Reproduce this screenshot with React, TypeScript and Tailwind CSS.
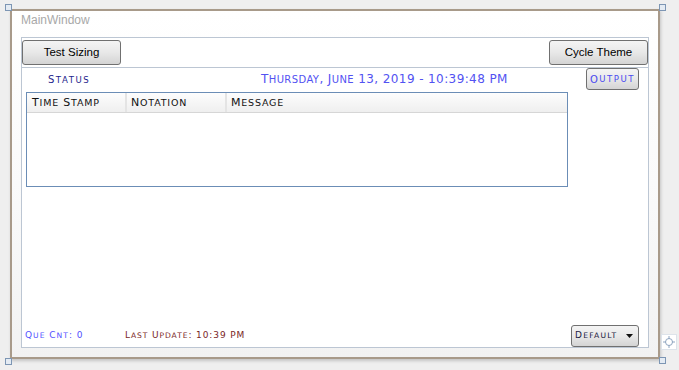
import React from 'react';

// Copperplate-style small caps: lowercase runs are drawn as smaller capitals
function Caps({ text, small }: { text: string; small: string }) {
  const parts = text.split(/([a-z]+)/);
  return (
    <>
      {parts.map((p, i) =>
        /^[a-z]+$/.test(p) ? (
          <span key={i} className={small}>
            {p.toUpperCase()}
          </span>
        ) : (
          <span key={i}>{p}</span>
        )
      )}
    </>
  );
}

function Handle({ className }: { className: string }) {
  return <div className={`absolute w-[7px] h-[7px] border border-[#7d96b4] bg-[#e4ebf3] ${className}`} />;
}

const btn =
  'rounded-[3px] border border-[#707070] bg-gradient-to-b from-[#f4f4f4] via-[#e8e8e8] to-[#d4d4d4] flex items-center';

export default function App() {
  return (
    <div className="relative w-[679px] h-[370px] bg-[#efefef] overflow-hidden pt-[9px] pl-[10px] font-['Liberation_Sans',sans-serif]">
      <div className="w-[650px] h-[350px] border-2 border-[#a89a8a] bg-gradient-to-b from-white via-[#fafafa] to-[#f2f2f2] shadow-[1px_2px_3px_rgba(0,0,0,0.18)] flex flex-col">
        <div className="h-[26px] pl-[9px] pt-[1px] text-[12px] text-[#a8a8a8] leading-[16px]">MainWindow</div>

        <div className="ml-[9px] w-[628px] h-[311px] border border-[#bcc6d3] bg-white flex flex-col">
          {/* button row */}
          <div className="h-[29px] flex justify-between items-start pt-[2px]">
            <button className={`${btn} w-[99px] h-[25px] justify-center text-[11.5px] text-black`}>Test Sizing</button>
            <button className={`${btn} w-[99px] h-[25px] justify-center text-[11.5px] text-black`}>Cycle Theme</button>
          </div>

          {/* content */}
          <div className="flex-1 border-t border-[#bcc6d3] flex flex-col font-['DejaVu_Sans',sans-serif]">
            <div className="h-[22px] flex items-center pl-[26px]">
              <span className="w-[213px] pt-[1px] text-[10px] tracking-[1.5px] text-[#1e1e8c]">
                <Caps text="Status" small="text-[8.6px]" />
              </span>
              <span className="text-[12px] tracking-[0.4px] text-[#5252f2]">
                <Caps text="Thursday, June 13, 2019 - 10:39:48 PM" small="text-[10px]" />
              </span>
              <button className={`${btn} ml-auto mr-[9px] w-[53px] h-[22px] justify-center text-[10px] tracking-[1.5px] text-[#4a4af0]`}>
                <Caps text="Output" small="text-[8.6px]" />
              </button>
            </div>

            {/* grid */}
            <div className="ml-[4px] mt-[2px] w-[542px] h-[95px] border border-[#6b8db6] flex flex-col">
              <div className="h-[20px] flex border-b border-[#d6d6d6] bg-gradient-to-b from-[#fdfdfd] to-[#efefef] text-[11px] tracking-[0.8px] text-[#111]">
                <div className="w-[100px] pl-[5px] pt-[2px] flex items-center border-r-2 border-[#e4e4e4]">
                  <span><Caps text="Time Stamp" small="text-[9.5px]" /></span>
                </div>
                <div className="w-[100px] pl-[4px] pt-[2px] flex items-center border-r-2 border-[#e4e4e4]">
                  <span><Caps text="Notation" small="text-[9.5px]" /></span>
                </div>
                <div className="flex-1 pl-[4px] pt-[2px] flex items-center">
                  <span><Caps text="Message" small="text-[9.5px]" /></span>
                </div>
              </div>
            </div>

            {/* footer */}
            <div className="mt-auto h-[22px] flex items-center">
              <span className="ml-[3px] w-[100px] text-[9px] tracking-[1px] text-[#5252ff]">
                <Caps text="Que Cnt: 0" small="text-[7.6px]" />
              </span>
              <span className="text-[9px] tracking-[0.9px] text-[#7a2626]">
                <Caps text="Last Update: 10:39 PM" small="text-[7.6px]" />
              </span>
              <button className={`${btn} ml-auto mr-[9px] w-[68px] h-[22px] pl-[3px] text-[9px] tracking-[1.2px] text-[#1a1a40]`}>
                <span><Caps text="Default" small="text-[7.6px]" /></span>
                <svg width="7" height="4" viewBox="0 0 7 4" className="ml-auto mr-[5px]">
                  <path d="M0 0H7L3.5 4Z" fill="#111" />
                </svg>
              </button>
            </div>
          </div>
        </div>
      </div>

      <Handle className="left-[5px] top-[4px]" />
      <Handle className="left-[659px] top-[4px]" />
      <Handle className="left-[5px] top-[358px]" />
      <Handle className="left-[659px] top-[357px]" />

      {/* snap target */}
      <div className="absolute left-[661px] top-[334px] w-[16px] h-[16px] bg-white border border-[#dde3ea] flex items-center justify-center">
        <svg width="12" height="12" viewBox="0 0 12 12" fill="none" stroke="#8fa5c0" strokeWidth="1">
          <circle cx="6" cy="6" r="3.5" />
          <path d="M6 0V3M6 9V12M0 6H3M9 6H12" />
        </svg>
      </div>
    </div>
  );
}
